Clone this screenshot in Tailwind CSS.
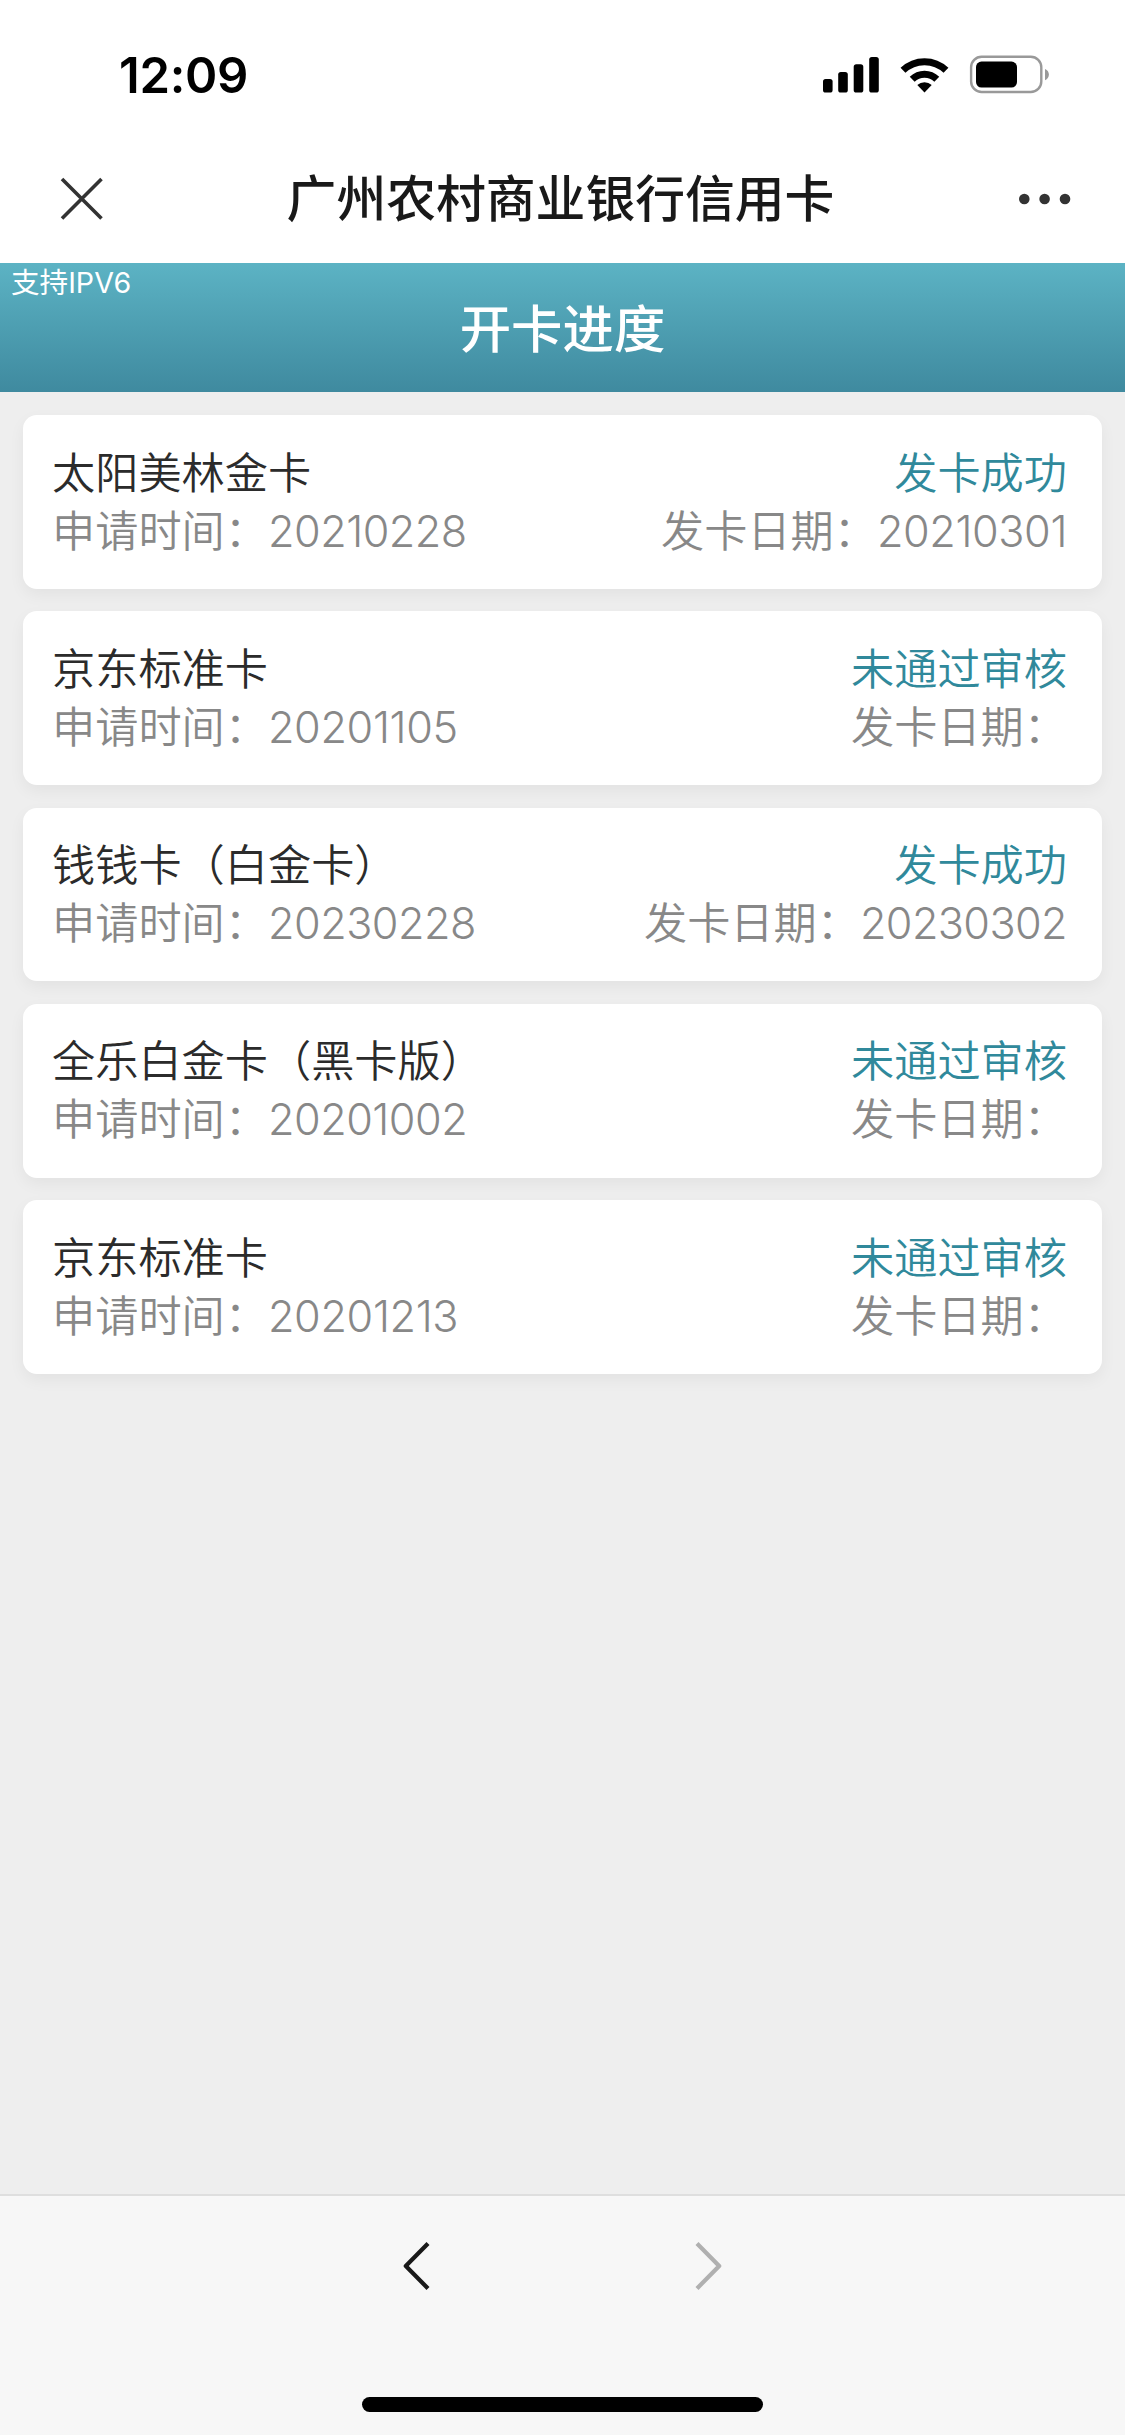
<!DOCTYPE html>
<html lang="zh-CN">
<head>
<meta charset="utf-8">
<title>开卡进度</title>
<script src="https://cdn.jsdelivr.net/npm/@tailwindcss/browser@4"></script>
</head>
<body class="flex h-[2435px] w-[1125px] flex-col overflow-hidden bg-[#eeeeee] font-['Inter','Noto_Sans_CJK_SC',sans-serif]">
  <div class="flex h-[132px] shrink-0 items-start justify-between bg-white pt-[54px] pr-[75px] pl-[119px]">
    <span class="pt-px text-[49px] leading-[42px] font-semibold tracking-[-0.3px] text-black">12:09</span>
    <svg class="h-[42px] w-[230px]" viewBox="820 54 230 42">
      <rect x="823" y="79" width="9.6" height="13.5" rx="2.6"/>
      <rect x="838.2" y="72" width="9.6" height="20.5" rx="2.6"/>
      <rect x="853.7" y="64.3" width="9.6" height="28.2" rx="2.6"/>
      <rect x="869.2" y="57" width="9.6" height="35.5" rx="2.6"/>
      <path d="M924.5 92.4l-7.2-7.3a10.4 10.4 0 0 1 14.4 0z"/>
      <path d="M912.2 79.2a17.6 17.6 0 0 1 24.6 0M903 70.3a31 31 0 0 1 43 0" fill="none" stroke="#000" stroke-width="7"/>
      <rect x="971.1" y="56.8" width="70.2" height="35.2" rx="10.5" fill="none" stroke="#999" stroke-width="2.4"/>
      <rect x="976" y="61.6" width="41" height="26" rx="5.5"/>
      <path d="M1045 69c5.200 2 5.200 9.200 0 11.200z" fill="#999"/>
    </svg>
  </div>
  <div class="flex h-[131px] shrink-0 items-center justify-between bg-white pt-[2px] pr-[54px] pl-[60px]">
    <svg class="h-[44px] w-[44px]" viewBox="0 0 44 44" fill="none" stroke="#333" stroke-width="3.6"><path d="M2 2l39.500 39.500M41.500 2L2 41.500"/></svg>
    <h1 class="-ml-[2px] text-[49.800px] leading-[64px] font-medium whitespace-nowrap text-[#191919]">广州农村商业银行信用卡</h1>
    <svg class="h-[12px] w-[52px]" viewBox="0 0 52 12" fill="#333"><circle cx="5.300" cy="6" r="5.300"/><circle cx="25.600" cy="6" r="5.300"/><circle cx="46" cy="6" r="5.300"/></svg>
  </div>
  <div class="relative flex h-[129px] shrink-0 items-center justify-center bg-linear-to-b from-[#5cb3c4] to-[#3f8a9f] pt-[2px]">
    <span class="absolute top-[2px] left-[11px] text-[28.600px] leading-[36px] text-white">支持IPV6</span>
    <h2 class="text-[51.400px] leading-[64px] font-medium text-white">开卡进度</h2>
  </div>
  <main class="flex flex-1 flex-col gap-[22.500px] px-[23px] pt-[23px] text-[43.200px] leading-[58px] font-[350]">
    <section class="grid h-[173.800px] shrink-0 grid-cols-[1fr_auto] content-start rounded-[14px] bg-white pt-[28.500px] pr-[35px] pl-[29px] shadow-[0_6px_16px_rgba(0,0,0,0.05)]">
      <span class="text-[#2b2b2b]">太阳美林金卡</span><span class="text-right text-[#30899b]">发卡成功</span>
      <span class="text-[#888]">申请时间：<span class="font-light tracking-[-0.500px]">20210228</span></span><span class="text-[#888]">发卡日期：<span class="font-light tracking-[-0.400px]">20210301</span></span>
    </section>
    <section class="grid h-[173.800px] shrink-0 grid-cols-[1fr_auto] content-start rounded-[14px] bg-white pt-[28.500px] pr-[35px] pl-[29px] shadow-[0_6px_16px_rgba(0,0,0,0.05)]">
      <span class="text-[#2b2b2b]">京东标准卡</span><span class="text-right text-[#30899b]">未通过审核</span>
      <span class="text-[#888]">申请时间：<span class="font-light tracking-[-0.350px]">20201105</span></span><span class="text-[#888]">发卡日期：</span>
    </section>
    <section class="grid h-[173.800px] shrink-0 grid-cols-[1fr_auto] content-start rounded-[14px] bg-white pt-[28.500px] pr-[35px] pl-[29px] shadow-[0_6px_16px_rgba(0,0,0,0.05)]">
      <span class="text-[#2b2b2b]">钱钱卡（白金卡）</span><span class="text-right text-[#30899b]">发卡成功</span>
      <span class="text-[#888]">申请时间：<span class="font-light tracking-[-0.500px]">20230228</span></span><span class="text-[#888]">发卡日期：<span class="font-light tracking-[-0.600px]">20230302</span></span>
    </section>
    <section class="grid h-[173.800px] shrink-0 grid-cols-[1fr_auto] content-start rounded-[14px] bg-white pt-[28.500px] pr-[35px] pl-[29px] shadow-[0_6px_16px_rgba(0,0,0,0.05)]">
      <span class="text-[#2b2b2b]">全乐白金卡（黑卡版）</span><span class="text-right text-[#30899b]">未通过审核</span>
      <span class="text-[#888]">申请时间：<span class="font-light tracking-[-0.500px]">20201002</span></span><span class="text-[#888]">发卡日期：</span>
    </section>
    <section class="grid h-[173.800px] shrink-0 grid-cols-[1fr_auto] content-start rounded-[14px] bg-white pt-[28.500px] pr-[35px] pl-[29px] shadow-[0_6px_16px_rgba(0,0,0,0.05)]">
      <span class="text-[#2b2b2b]">京东标准卡</span><span class="text-right text-[#30899b]">未通过审核</span>
      <span class="text-[#888]">申请时间：<span class="font-light tracking-[-0.350px]">20201213</span></span><span class="text-[#888]">发卡日期：</span>
    </section>
  </main>
  <footer class="flex h-[241px] shrink-0 flex-col items-center justify-between border-t-2 border-[#dedede] bg-[#f7f7f7] pt-[45px] pb-[23px]">
    <nav class="flex w-[319px] justify-between">
      <svg class="h-[50px] w-[27px]" viewBox="0 0 27 50" fill="none" stroke="#191919" stroke-width="4.200" stroke-linejoin="round"><path d="M25 2.500L2.800 25L25 47.500"/></svg>
      <svg class="h-[50px] w-[27px]" viewBox="0 0 27 50" fill="none" stroke="#b0b0b0" stroke-width="4.200" stroke-linejoin="round"><path d="M2 2.500L24.200 25L2 47.500"/></svg>
    </nav>
    <div class="h-[15px] w-[401px] rounded-full bg-black"></div>
  </footer>
</body>
</html>
